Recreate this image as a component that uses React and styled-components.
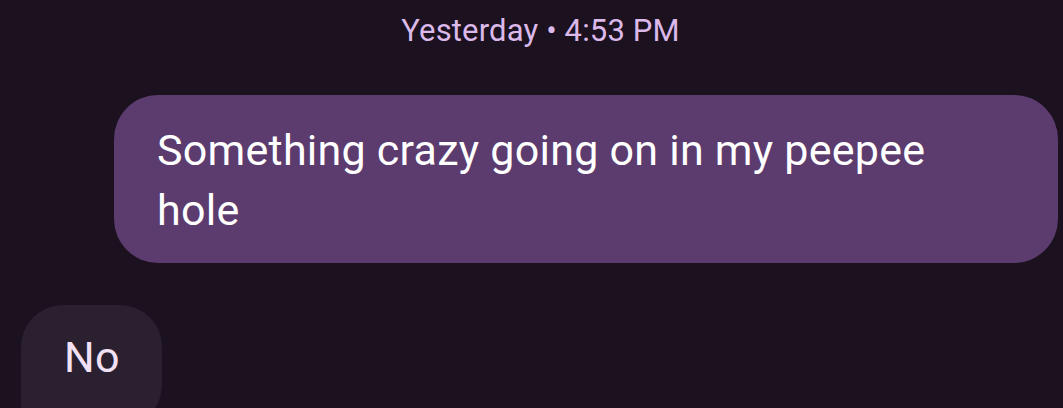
import React from "react";
import styled, { createGlobalStyle } from "styled-components";

const Global = createGlobalStyle`
  html, body { margin: 0; padding: 0; background: #1b111f; }
  body { width: 1063px; height: 408px; overflow: hidden; font-family: Roboto, "Noto Sans", sans-serif; }
`;

const Screen = styled.div`
  width: 1063px;
  height: 408px;
  background: #1b111f;
  display: flex;
  flex-direction: column;
  overflow: hidden;
`;

const Stamp = styled.div`
  text-align: center;
  color: #dbb9ea;
  font-size: 31px;
  letter-spacing: 0.15px;
  line-height: 38px;
  padding-top: 12px;
  padding-left: 18px;
`;

const Row = styled.div`
  display: flex;
  flex-shrink: 0;
  justify-content: ${(p) => (p.$out ? "flex-end" : "flex-start")};
  padding: ${(p) => (p.$out ? "45px 5px 0 0" : "42px 0 0 21px")};
`;

const Bubble = styled.div`
  background: ${(p) => (p.$out ? "#5c3b6e" : "#2a2030")};
  color: ${(p) => (p.$out ? "#ffffff" : "#f2e1f5")};
  font-size: 43px;
  letter-spacing: 0.25px;
  line-height: 60px;
  border-radius: ${(p) => (p.$out ? "44px" : "42px 42px 42px 8px")};
  padding: ${(p) => (p.$out ? "25px 90px 23px 43px" : "22px 42px 40px 43px")};
  width: ${(p) => (p.$out ? "944px" : "auto")};
  box-sizing: border-box;
`;

export default function App() {
  return (
    <Screen>
      <Global />
      <Stamp>Yesterday • 4:53 PM</Stamp>
      <Row $out>
        <Bubble $out>Something crazy going on in my peepee hole</Bubble>
      </Row>
      <Row>
        <Bubble>No</Bubble>
      </Row>
    </Screen>
  );
}
